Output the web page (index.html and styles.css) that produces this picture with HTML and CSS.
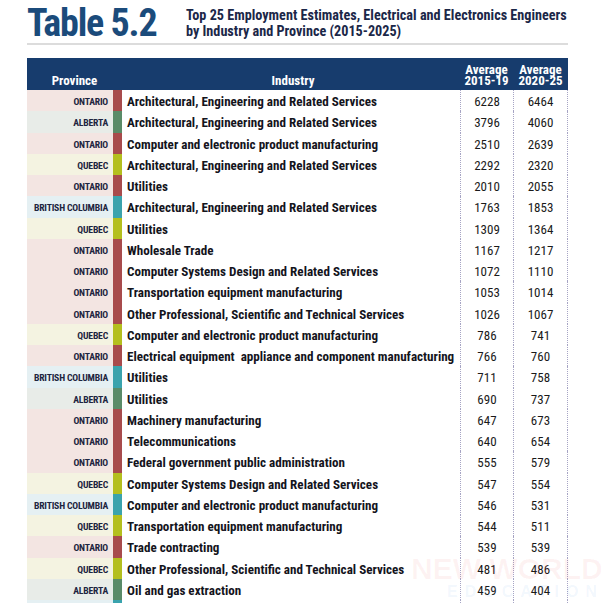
FILE: index.html
```html
<!DOCTYPE html>
<html>
<head>
<meta charset="utf-8">
<link rel="stylesheet" href="styles.css">
</head>
<body>
<div class="page">
  <div class="top">
    <h1 class="title">Table 5.2</h1>
    <p class="subtitle">Top 25 Employment Estimates, Electrical and Electronics Engineers<br>by Industry and Province (2015-2025)</p>
  </div>
  <div class="rule"></div>
  <div class="table">
    <div class="head">
      <div class="h-prov">Province</div>
      <div class="h-ind">Industry</div>
      <div class="h-num">Average<br>2015-19</div>
      <div class="h-num">Average<br>2020-25</div>
    </div>
    <div class="row on"><div class="prov">ONTARIO</div><div class="bar"></div><div class="ind">Architectural, Engineering and Related Services</div><div class="num">6228</div><div class="num last">6464</div></div>
    <div class="row ab"><div class="prov">ALBERTA</div><div class="bar"></div><div class="ind">Architectural, Engineering and Related Services</div><div class="num">3796</div><div class="num last">4060</div></div>
    <div class="row on"><div class="prov">ONTARIO</div><div class="bar"></div><div class="ind">Computer and electronic product manufacturing</div><div class="num">2510</div><div class="num last">2639</div></div>
    <div class="row qc"><div class="prov">QUEBEC</div><div class="bar"></div><div class="ind">Architectural, Engineering and Related Services</div><div class="num">2292</div><div class="num last">2320</div></div>
    <div class="row on"><div class="prov">ONTARIO</div><div class="bar"></div><div class="ind">Utilities</div><div class="num">2010</div><div class="num last">2055</div></div>
    <div class="row bc"><div class="prov">BRITISH COLUMBIA</div><div class="bar"></div><div class="ind">Architectural, Engineering and Related Services</div><div class="num">1763</div><div class="num last">1853</div></div>
    <div class="row qc"><div class="prov">QUEBEC</div><div class="bar"></div><div class="ind">Utilities</div><div class="num">1309</div><div class="num last">1364</div></div>
    <div class="row on"><div class="prov">ONTARIO</div><div class="bar"></div><div class="ind">Wholesale Trade</div><div class="num">1167</div><div class="num last">1217</div></div>
    <div class="row on"><div class="prov">ONTARIO</div><div class="bar"></div><div class="ind">Computer Systems Design and Related Services</div><div class="num">1072</div><div class="num last">1110</div></div>
    <div class="row on"><div class="prov">ONTARIO</div><div class="bar"></div><div class="ind">Transportation equipment manufacturing</div><div class="num">1053</div><div class="num last">1014</div></div>
    <div class="row on"><div class="prov">ONTARIO</div><div class="bar"></div><div class="ind">Other Professional, Scientific and Technical Services</div><div class="num">1026</div><div class="num last">1067</div></div>
    <div class="row qc"><div class="prov">QUEBEC</div><div class="bar"></div><div class="ind">Computer and electronic product manufacturing</div><div class="num">786</div><div class="num last">741</div></div>
    <div class="row on"><div class="prov">ONTARIO</div><div class="bar"></div><div class="ind">Electrical equipment&nbsp; appliance and component manufacturing</div><div class="num">766</div><div class="num last">760</div></div>
    <div class="row bc"><div class="prov">BRITISH COLUMBIA</div><div class="bar"></div><div class="ind">Utilities</div><div class="num">711</div><div class="num last">758</div></div>
    <div class="row ab"><div class="prov">ALBERTA</div><div class="bar"></div><div class="ind">Utilities</div><div class="num">690</div><div class="num last">737</div></div>
    <div class="row on"><div class="prov">ONTARIO</div><div class="bar"></div><div class="ind">Machinery manufacturing</div><div class="num">647</div><div class="num last">673</div></div>
    <div class="row on"><div class="prov">ONTARIO</div><div class="bar"></div><div class="ind">Telecommunications</div><div class="num">640</div><div class="num last">654</div></div>
    <div class="row on"><div class="prov">ONTARIO</div><div class="bar"></div><div class="ind">Federal government public administration</div><div class="num">555</div><div class="num last">579</div></div>
    <div class="row qc"><div class="prov">QUEBEC</div><div class="bar"></div><div class="ind">Computer Systems Design and Related Services</div><div class="num">547</div><div class="num last">554</div></div>
    <div class="row bc"><div class="prov">BRITISH COLUMBIA</div><div class="bar"></div><div class="ind">Computer and electronic product manufacturing</div><div class="num">546</div><div class="num last">531</div></div>
    <div class="row qc"><div class="prov">QUEBEC</div><div class="bar"></div><div class="ind">Transportation equipment manufacturing</div><div class="num">544</div><div class="num last">511</div></div>
    <div class="row on"><div class="prov">ONTARIO</div><div class="bar"></div><div class="ind">Trade contracting</div><div class="num">539</div><div class="num last">539</div></div>
    <div class="row qc"><div class="prov">QUEBEC</div><div class="bar"></div><div class="ind">Other Professional, Scientific and Technical Services</div><div class="num">481</div><div class="num last">486</div></div>
    <div class="row ab"><div class="prov">ALBERTA</div><div class="bar"></div><div class="ind">Oil and gas extraction</div><div class="num">459</div><div class="num last">404</div></div>
    <div class="row bc"><div class="prov"></div><div class="bar"></div><div class="ind"></div><div class="num"></div><div class="num last"></div></div>
  </div>
</div>
<div class="watermark"><span class="wm1">NEW WORLD</span><span class="wm2">EDUCATION</span></div>
</body>
</html>
```

FILE: styles.css
```css
html, body {
  margin: 0;
  padding: 0;
  background: #fff;
  overflow: hidden;
}
body {
  position: relative;
  height: 603px;
  font-family: "Roboto Condensed", "Open Sans", sans-serif;
  color: #1c1c24;
}
.page {
  padding: 0 0 0 27px;
  width: 541px;
}
.top {
  display: flex;
  align-items: flex-start;
  height: 43px;
}
.title {
  margin: 3px 0 0 0;
  font-size: 38px;
  line-height: 40px;
  font-weight: 700;
  color: #1b4b7b;
  width: 159px;
  flex: none;
  letter-spacing: -1.2px;
}
.subtitle {
  margin: 7px 0 0 0;
  font-size: 14.2px;
  line-height: 16px;
  font-weight: 700;
  color: #1b2748;
  white-space: nowrap;
}
.rule {
  height: 2px;
  background: #dcdcdc;
  margin-bottom: 13px;
}
.head {
  display: grid;
  grid-template-columns: 95px 338px 53px 55px;
  height: 32px;
  background: #173c6d;
  color: #fff;
  font-weight: 700;
  font-size: 13px;
  line-height: 11px;
  align-items: end;
  padding-bottom: 4px;
  box-sizing: border-box;
}
.h-prov { text-align: center; }
.h-ind { text-align: center; padding-left: 4px; }
.h-num { text-align: center; }
.row {
  display: grid;
  grid-template-columns: 86px 9px 338px 53px 55px;
  height: 21.25px;
}
.prov {
  font-size: 9.7px;
  font-weight: 700;
  color: #1d2540;
  padding: 2px 5px 0 0;
  display: flex;
  align-items: center;
  justify-content: flex-end;
  white-space: nowrap;
  letter-spacing: -0.2px;
}
.ind {
  font-size: 13.1px;
  font-weight: 700;
  color: #14141c;
  padding: 2px 0 0 5px;
  display: flex;
  align-items: center;
  white-space: nowrap;
}
.num {
  font-size: 13px;
  color: #1a1a1a;
  padding-top: 2px;
  display: flex;
  align-items: center;
  justify-content: center;
  border-left: 1px dotted #a6a4c4;
}
.num.last {
  border-right: 1px dotted #a6a4c4;
}
.on .prov { background: #f3e5e2; }
.on .bar { background: #a84b4c; }
.ab .prov { background: #e8ece8; }
.ab .bar { background: #5a8b68; }
.qc .prov { background: #f4f3e1; }
.qc .bar { background: #b4bf1e; }
.bc .prov { background: #e5f0f3; }
.bc .bar { background: #3aa3ad; }
.watermark {
  position: absolute;
  left: 411px;
  top: 554px;
  display: flex;
  flex-direction: column;
  align-items: flex-start;
  font-family: "Liberation Sans", sans-serif;
  font-weight: 700;
  pointer-events: none;
}
.wm1 {
  font-size: 30px;
  line-height: 30px;
  color: rgba(235, 50, 50, 0.06);
  white-space: nowrap;
}
.wm2 {
  margin-left: 36px;
  font-size: 16px;
  line-height: 16px;
  color: rgba(70, 150, 225, 0.08);
  letter-spacing: 7px;
  white-space: nowrap;
}
```
